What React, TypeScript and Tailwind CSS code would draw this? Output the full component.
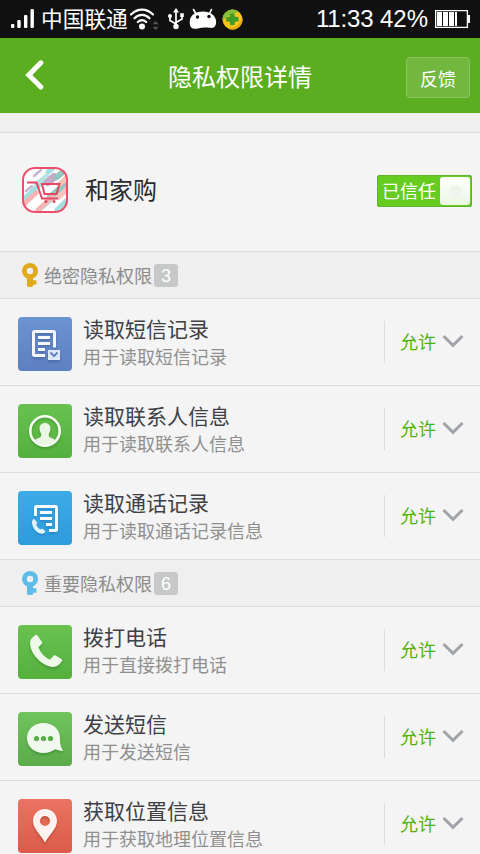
import type { ReactNode } from "react";

type Permission = {
  title: string;
  detail: string;
  tile: string;
  icon: ReactNode;
};

function SmsRecordIcon() {
  return (
    <svg viewBox="0 0 54 54" className="size-full drop-shadow-[0_2px_1px_rgba(30,50,110,0.3)]" fill="none">
      <path d="M27 38.5H16.5a1 1 0 0 1-1-1v-22a1 1 0 0 1 1-1h19a1 1 0 0 1 1 1v15" stroke="#f6f8fd" strokeWidth="3" />
      <path d="M20 20.5h12M20 26.5h12M20 32.5h7" stroke="#f6f8fd" strokeWidth="2.8" />
      <path d="M30 33h12v10H30z" fill="#dde7f8" />
      <path d="M32.5 35.5l3.5 3.6 3.5-3.6" stroke="#5c7fc4" strokeWidth="2" />
    </svg>
  );
}

function ContactsIcon() {
  return (
    <svg viewBox="0 0 54 54" className="size-full drop-shadow-[0_2px_1px_rgba(20,90,20,0.3)]" fill="none">
      <circle cx="27" cy="27" r="14.7" stroke="#fafdf8" strokeWidth="2.6" />
      <path
        d="M27 19c3.400 0 5.500 2.400 5.400 5.500 0 2.200-.6 3.900-1.600 5.200-.3 2.200.4 3.400 1.900 4.100 1.700.8 3.500 1.300 4.800 2.500A15 15 0 0 1 27 41.500a15 15 0 0 1-10.500-5.200c1.300-1.200 3.100-1.700 4.800-2.500 1.500-.7 2.200-1.900 1.900-4.100-1-1.300-1.600-3-1.600-5.200C21.500 21.400 23.600 19 27 19z"
        fill="#eaf7e5"
      />
    </svg>
  );
}

function CallRecordIcon() {
  return (
    <svg viewBox="0 0 54 54" className="size-full drop-shadow-[0_2px_1px_rgba(0,70,130,0.25)]" fill="none">
      <path d="M17.500 25V16.500a1 1 0 0 1 1-1h19a1 1 0 0 1 1 1v22a1 1 0 0 1-1 1H31" stroke="#f5fbff" strokeWidth="3" />
      <path d="M22 21.500h12M22 27.500h12M28 33.500h6" stroke="#f5fbff" strokeWidth="2.8" />
      <path
        d="M16 27.800l3 3.400c.5.600.2 1.200-.8 2.100.8 2.300 2.200 4.100 4.200 5.200 1-.8 1.700-1 2.300-.5l2.700 2.200c-.5 1.500-2 2.800-4 2.600-5-.5-9.200-6-9.400-11-.1-1.800.7-3.300 2-4z"
        fill="#dff1fb"
      />
    </svg>
  );
}

function PhoneIcon() {
  return (
    <svg viewBox="0 0 54 54" className="size-full drop-shadow-[0_2px_1px_rgba(20,90,20,0.3)]">
      <path
        d="M17.500 10.200c.7-.6 1.400-.4 1.900.3l4.600 6.500c.5.700.3 1.400-.3 2l-2.600 2.500c-.4.500-.5 1-.3 1.600 1.700 4.800 5.300 8.800 10 11.200.7.300 1.200.200 1.700-.2l3.200-3.400c.6-.6 1.200-.7 1.900-.2l5.800 3.600c.8.500 1 1.200.5 2-2 3.900-5.400 6.100-9.400 5.800C23.500 40.500 12.400 29.200 12 18c-.1-3.300 2.200-6.200 5.500-7.800z"
        fill="#edf8e9"
      />
    </svg>
  );
}

function BubbleIcon() {
  return (
    <svg viewBox="0 0 54 54" className="size-full drop-shadow-[0_2px_1px_rgba(20,90,20,0.3)]">
      <path d="M25.500 11C35 11 42 17.500 42 26c0 3 0 5 .8 7.500.5 2 1.200 3.700 2.200 5.500-3.500-.3-5.800-.8-8-1.700-3.300 2.400-7 3.700-11.500 3.700C16 41 9 34.500 9 26s7-15 16.500-15z" fill="#f1f9ee" />
      <circle cx="18.500" cy="26.500" r="2.600" fill="#5aad49" />
      <circle cx="25.500" cy="26.500" r="2.600" fill="#5aad49" />
      <circle cx="32.500" cy="26.500" r="2.600" fill="#5aad49" />
    </svg>
  );
}

function PinIcon() {
  return (
    <svg viewBox="0 0 54 54" className="size-full drop-shadow-[0_2px_1px_rgba(120,20,10,0.3)]">
      <path
        fillRule="evenodd"
        d="M27 10c7 0 12 5.200 12 12 0 7.500-7.500 13.500-12 21.500C22.500 35.500 15 29.500 15 22c0-6.800 5-12 12-12zm0 7a5 5 0 1 0 0 10 5 5 0 0 0 0-10z"
        fill="#fdf2ef"
      />
    </svg>
  );
}

const BLUE = "bg-linear-to-b from-[#6a93d2] to-[#5d80c1]";
const GREEN = "bg-linear-to-b from-[#69c24f] to-[#54b03d]";
const SKY = "bg-linear-to-b from-[#3eabe9] to-[#2d9bdc]";
const LIGHT_GREEN = "bg-linear-to-b from-[#70c45b] to-[#5bab4a]";
const RED = "bg-linear-to-b from-[#ea7361] to-[#db5b49]";

const secretPermissions: Permission[] = [
  { title: "读取短信记录", detail: "用于读取短信记录", tile: BLUE, icon: <SmsRecordIcon /> },
  { title: "读取联系人信息", detail: "用于读取联系人信息", tile: GREEN, icon: <ContactsIcon /> },
  { title: "读取通话记录", detail: "用于读取通话记录信息", tile: SKY, icon: <CallRecordIcon /> },
];

const importantPermissions: Permission[] = [
  { title: "拨打电话", detail: "用于直接拨打电话", tile: GREEN, icon: <PhoneIcon /> },
  { title: "发送短信", detail: "用于发送短信", tile: LIGHT_GREEN, icon: <BubbleIcon /> },
  { title: "获取位置信息", detail: "用于获取地理位置信息", tile: RED, icon: <PinIcon /> },
];

function StatusBar() {
  return (
    <div className="flex h-[38px] shrink-0 items-center bg-[#111] pr-[10px] pl-[11px] text-white">
      <svg width="23" height="20" viewBox="0 0 23 20" fill="#fff">
        <rect x="0" y="15" width="3.400" height="4" rx="1" />
        <rect x="6.300" y="11" width="3.400" height="8" rx="1" />
        <rect x="13" y="6" width="3.400" height="13" rx="1" />
        <rect x="19.500" y="0" width="3.400" height="19" rx="1" />
      </svg>
      <span className="mb-[2px] ml-[7px] w-[88px] text-[21.700px] leading-none whitespace-nowrap">中国联通</span>
      <svg width="30" height="24" viewBox="0 0 30 24" fill="none">
        <g stroke="#fff" strokeWidth="2.200" strokeLinecap="round">
          <path d="M2 7.500C8.500 1 17.500 1 24 7.500" />
          <path d="M5.500 11.200c4.500-4.400 10.500-4.400 15 0" />
          <path d="M8.800 15c2.600-2.400 5.800-2.400 8.400 0" />
        </g>
        <circle cx="13" cy="19.500" r="3" fill="#fff" />
        <path d="M23.500 17.300l3-3.300 3 3.300zM23.500 19.700l3 3.300 3-3.300z" fill="#555" />
      </svg>
      <svg className="ml-[8px]" width="18" height="22" viewBox="0 0 18 22" fill="none" stroke="#fff" strokeWidth="1.700">
        <path d="M9 3v15M3 8v4.500L9 16M15 7.500v3.500L9 14.500" />
        <path d="M9 0l3 4.500H6zM13.200 5.300h3.600v3.600h-3.600z" fill="#fff" stroke="none" />
        <circle cx="3" cy="8" r="2" fill="#fff" stroke="none" />
        <circle cx="9" cy="18.500" r="2.700" fill="#fff" stroke="none" />
      </svg>
      <svg className="ml-[4px]" width="28" height="22" viewBox="0 0 28 22" fill="none">
        <path d="M7 6L4.500 1.500M20.500 5.500l2-4" stroke="#fff" strokeWidth="1.600" strokeLinecap="round" />
        <path d="M14 3.500c7.500 0 11.500 3.500 13 8.500.5 3.500-.3 6-2 7.200-1.500 1-3 .8-4.500.6-4.500-.5-8-.3-11.500.6-2.500.7-5 .3-6.500-.7C.7 18 .3 15 1 11.500 2.500 6.500 6.500 3.500 14 3.500z" fill="#fff" />
        <circle cx="8.500" cy="9" r="1.700" fill="#111" />
        <circle cx="20" cy="8.500" r="1.700" fill="#111" />
      </svg>
      <svg className="ml-[5px]" width="21" height="21" viewBox="0 0 21 21" fill="none">
        <circle cx="10.500" cy="10.500" r="10" fill="#f5c51c" />
        <path d="M.7 12A10 10 0 0 1 17 3C11 4 4 7 .7 12z" fill="#81bf3b" />
        <path d="M20.500 9A10 10 0 0 1 6 19.400C13 19.500 18 15 20.500 9z" fill="#e5a80c" />
        <path d="M7.800 4.800l4.500-.5.500 3.500 3.600.2.200 4.300-3.700.5-.3 3.300-4.300.2-.4-3.500-3.500-.3-.3-4.300 3.700-.4z" fill="#419b27" />
      </svg>
      <div className="ml-auto flex items-center font-['Liberation_Sans',sans-serif] text-[24px] leading-none">
        <span className="w-[64px] tracking-[-0.200px]">11:33</span>
        <span className="w-[55px]">42%</span>
      </div>
      <svg width="35" height="18" viewBox="0 0 35 18">
        <rect x="0.600" y="0.600" width="31.800" height="16.800" fill="none" stroke="#fff" strokeWidth="1.300" />
        <path d="M2 2h5v14H2zM8 2h5v14H8zM14 2h5v14h-5zM20 2h2v14h-2zM33 5h2v8h-2z" fill="#fff" />
      </svg>
    </div>
  );
}

function Header() {
  return (
    <header className="grid h-[75px] shrink-0 grid-cols-[64px_1fr_64px] items-center bg-[#5bae20] pr-[10px] pl-[10px] text-white">
      <svg className="mb-[2px] ml-[15px]" width="20" height="30" viewBox="0 0 20 30" fill="none">
        <path d="M15.800 2.800L3.800 15l12 12" stroke="#fff" strokeWidth="5" strokeLinecap="round" />
      </svg>
      <h1 className="text-center text-[24px] leading-none">隐私权限详情</h1>
      <button className="mt-1 h-[41px] w-[64px] rounded-[4px] border border-[#8cc662] bg-[#72b840] text-[18px] leading-none">
        反馈
      </button>
    </header>
  );
}

function AppLogo() {
  return (
    <svg className="mb-[4px]" width="46" height="46" viewBox="0 0 46 46" fill="none">
      <defs>
        <clipPath id="logo-clip">
          <rect x="1" y="1" width="44" height="44" rx="12" />
        </clipPath>
      </defs>
      <rect x="1" y="1" width="44" height="44" rx="12" fill="#fff" />
      <g clipPath="url(#logo-clip)" strokeLinecap="round">
        <path d="M3 31L21 14M35 43l9-9M26 5l4-3" stroke="#a2dfe3" strokeWidth="5" />
        <path d="M14 17L25 8M19 42l16-14" stroke="#b5e3e2" strokeWidth="4" />
        <path d="M26 15l6-5" stroke="#c4aac7" strokeWidth="8" />
        <path d="M35 10l7-6M28 30l14-12" stroke="#8fc8c1" strokeWidth="6" />
        <path d="M2 37l12-11M16 43l14-13" stroke="#f6b4b5" strokeWidth="5" />
        <path d="M38 17l6-6M37 30l8-8" stroke="#f4c4b8" strokeWidth="5" />
        <path d="M12 9l7-6M4 24l6-5" stroke="#c8b7d2" strokeWidth="2.500" />
      </g>
      <rect x="1" y="1" width="44" height="44" rx="12" stroke="#ed4d68" strokeWidth="2" />
      <path d="M5 15.500h9.500L20 31.500h16" stroke="#e84762" strokeWidth="2" />
      <path d="M20 17h17.500L34.500 27H22.500z" stroke="#e84762" strokeWidth="2" />
      <circle cx="24" cy="34.500" r="1.500" fill="#e84762" />
      <circle cx="32" cy="34.500" r="1.500" fill="#e84762" />
    </svg>
  );
}

function TrustSwitch() {
  return (
    <div className="mb-[2px] flex h-8 w-[95px] items-center justify-between rounded-[2px] border border-[#5fb32d] bg-[#66cc20] pr-[1px] pl-[4px] text-white">
      <span className="mb-[2px] text-[18px] leading-none">已信任</span>
      <span className="flex h-[28px] w-[30px] items-center justify-center rounded-[3px] bg-linear-to-b from-white to-[#eaf6e2]">
        <span className="size-[13px] rounded-full bg-[#eef3ec]" />
      </span>
    </div>
  );
}

function SectionHeader({ label, count, color }: { label: string; count: number; color: string }) {
  return (
    <div className="flex h-[47px] shrink-0 items-center border-b border-[#dcdcdc] bg-[#efefef] pl-[22px]">
      <svg className={color} width="16" height="24" viewBox="0 0 16 24" fill="currentColor">
        <path
          fillRule="evenodd"
          d="M8 0a8 8 0 0 1 3 15.400V17l3.500.5v4L11 22v1.500L9.500 24H6l-1-1.500v-7.100A8 8 0 0 1 8 0zm0 4.800a3.200 3.200 0 1 0 0 6.400 3.200 3.200 0 0 0 0-6.400z"
        />
      </svg>
      <span className="ml-[6px] text-[18px] leading-none text-[#8b8b8b]">{label}</span>
      <span className="ml-[2px] flex h-[23px] w-6 items-center justify-center rounded-[3px] bg-[#c6c9c8] font-['Liberation_Sans',sans-serif] text-[18px] leading-none text-white">
        <span className="pt-[2px]">{count}</span>
      </span>
    </div>
  );
}

function PermissionRow({ title, detail, tile, icon }: Permission) {
  return (
    <li className="flex h-[87px] shrink-0 items-center border-b border-[#dcdcdc] pr-[16px] pl-[18px]">
      <div className={`mt-[4px] size-[54px] shrink-0 overflow-hidden rounded-[4px] ${tile}`}>{icon}</div>
      <div className="ml-[11px] flex-1 whitespace-nowrap">
        <div className="text-[21px] leading-[28px] text-[#3e4046]">{title}</div>
        <div className="text-[18px] leading-[28px] text-[#8f8f8f]">{detail}</div>
      </div>
      <div className="flex h-[42px] items-center border-l border-[#dcdcdc] pl-[15px]">
        <span className="mb-[2px] text-[18px] leading-none text-[#4db30c]">允许</span>
        <svg className="mb-[3px] ml-[6px]" width="22" height="14" viewBox="0 0 22 14" fill="none">
          <path d="M1.500 2l9.500 9.300L20.500 2" stroke="#a0a4a8" strokeWidth="3" />
        </svg>
      </div>
    </li>
  );
}

export default function App() {
  return (
    <div className="flex h-[854px] w-[480px] flex-col overflow-hidden bg-[#f4f4f4] font-['Noto_Sans_CJK_SC',sans-serif]">
      <StatusBar />
      <Header />
      <div className="h-5 shrink-0 border-b border-[#dcdcdc] bg-[#efefef]" />
      <section className="flex h-[119px] shrink-0 items-center border-b border-[#dcdcdc] pr-2 pl-[22px]">
        <AppLogo />
        <h2 className="mb-[6px] ml-[17px] flex-1 text-[24px] leading-none text-[#2b2b2b]">和家购</h2>
        <TrustSwitch />
      </section>
      <SectionHeader label="绝密隐私权限" count={3} color="text-[#dfab1c]" />
      <ul>
        {secretPermissions.map((item) => (
          <PermissionRow key={item.title} {...item} />
        ))}
      </ul>
      <SectionHeader label="重要隐私权限" count={6} color="text-[#5fbce8]" />
      <ul>
        {importantPermissions.map((item) => (
          <PermissionRow key={item.title} {...item} />
        ))}
      </ul>
    </div>
  );
}
